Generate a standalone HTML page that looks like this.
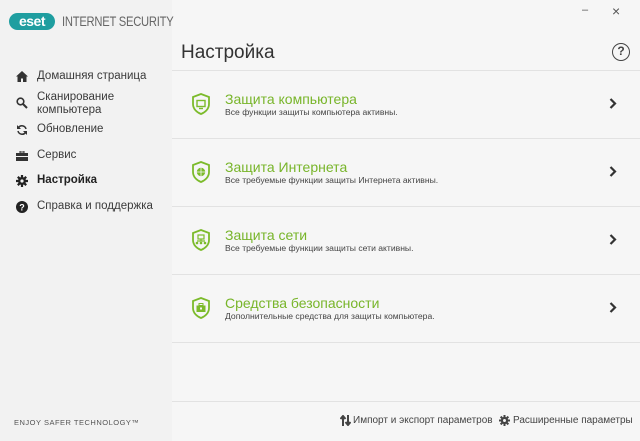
<!DOCTYPE html>
<html><head><meta charset="utf-8"><style>
*{margin:0;padding:0;box-sizing:border-box}
body{width:640px;height:441px;overflow:hidden;background:#f6f6f6;font-family:"Liberation Sans","DejaVu Sans",sans-serif;position:relative;color:#333}
.side{position:absolute;left:0;top:0;width:172px;height:441px;background:#f2f2f2}
.abs{position:absolute}
.nav{position:absolute;left:37px;font-size:11.5px;color:#3a3a3a;line-height:13px}
.ic{position:absolute;left:16px}
.line{position:absolute;left:172px;width:468px;height:1px;background:#e2e2e2}
.t{position:absolute;left:225px;font-size:14px;color:#78b52a}
.d{position:absolute;left:225px;font-size:8.6px;color:#444}
.chev{position:absolute;left:609px}
.sh{position:absolute;left:191px}
</style></head><body>
<div class="side"></div>
<div class="abs" style="left:9px;top:13px;width:46px;height:17px;border-radius:9px;background:#1f9ea0;color:#fff;font-weight:bold;font-size:14px;line-height:17px;text-align:center;letter-spacing:-0.5px">eset</div>
<div class="abs" style="left:62px;top:13px;font-size:14px;color:#666;letter-spacing:-0.3px;transform:scaleX(0.8);transform-origin:0 0;white-space:nowrap">INTERNET SECURITY</div>
<div class="abs" style="left:582px;top:4px;font-size:11px;color:#555">–</div>
<div class="abs" style="left:612px;top:3px;font-size:14px;color:#555">×</div>
<div class="abs" style="left:181px;top:42px;font-size:19px;color:#333">Настройка</div>
<div class="abs" style="left:612px;top:43px;width:18px;height:18px;border:1.6px solid #444;border-radius:50%;font-size:12px;font-weight:bold;text-align:center;line-height:15px;color:#444">?</div>
<svg class="ic" style="top:71px" width="12" height="11" viewBox="0 0 12 11"><path d="M6 0L0 5.5h1.5V11h3.5V7.5h2V11h3.5V5.5H12z" fill="#333"/></svg>
<div class="nav" style="top:70px">Домашняя страница</div>
<svg class="ic" style="top:97px" width="12" height="12" viewBox="0 0 12 12"><circle cx="4.5" cy="4.5" r="3.3" stroke="#333" stroke-width="1.6" fill="none"/><path d="M7 7l4 4" stroke="#333" stroke-width="2"/></svg>
<div class="nav" style="top:91px">Сканирование<br>компьютера</div>
<svg class="ic" style="top:124px" width="12" height="12" viewBox="0 0 12 12"><path d="M10 5A4.2 4.2 0 0 0 2.5 3.5M2 7a4.2 4.2 0 0 0 7.5 1.5" stroke="#333" stroke-width="1.5" fill="none"/><path d="M1 1v4h4z M11 11V7H7z" fill="#333"/></svg>
<div class="nav" style="top:123px">Обновление</div>
<svg class="ic" style="top:151px" width="12" height="10" viewBox="0 0 12 10"><path d="M4 0h4v2H4z" fill="none" stroke="#333"/><rect x="0" y="2" width="12" height="8" fill="#333"/><rect x="0" y="5" width="12" height="1" fill="#f2f2f2"/></svg>
<div class="nav" style="top:149px">Сервис</div>
<svg class="ic" style="top:175px" width="12" height="12" viewBox="0 0 12 12"><circle cx="6" cy="6" r="4" fill="#222"/><path d="M6 0v12M0 6h12M1.8 1.8l8.4 8.4M10.2 1.8l-8.4 8.4" stroke="#222" stroke-width="2.2"/><circle cx="6" cy="6" r="1.6" fill="#f2f2f2"/></svg>
<div class="nav" style="top:174px;font-weight:bold;color:#222">Настройка</div>
<svg class="ic" style="top:201px" width="12" height="12" viewBox="0 0 12 12"><circle cx="6" cy="6" r="6" fill="#222"/><text x="6" y="9.5" font-size="9" font-weight="bold" fill="#fff" text-anchor="middle" font-family="Liberation Sans">?</text></svg>
<div class="nav" style="top:200px">Справка и поддержка</div>
<div class="abs" style="left:14px;top:418px;font-size:7.5px;letter-spacing:0.5px;color:#555">ENJOY SAFER TECHNOLOGY™</div>
<div class="line" style="top:70px"></div>
<div class="line" style="top:138px"></div>
<div class="line" style="top:206px"></div>
<div class="line" style="top:274px"></div>
<div class="line" style="top:342px"></div>
<div class="line" style="top:401px"></div>
<svg class="sh" style="top:93px" width="20" height="22" viewBox="0 0 20 22"><path d="M10 1L2 4v7c0 5 4 8.5 8 10 4-1.5 8-5 8-10V4z" fill="none" stroke="#7cbb2b" stroke-width="1.8"/><rect x="6" y="7.5" width="8" height="6" fill="none" stroke="#7cbb2b" stroke-width="1.4"/><path d="M8 15.5h4" stroke="#7cbb2b" stroke-width="1.4"/></svg>
<div class="t" style="top:91px">Защита компьютера</div>
<div class="d" style="top:107px">Все функции защиты компьютера активны.</div>
<svg class="sh" style="top:161px" width="20" height="22" viewBox="0 0 20 22"><path d="M10 1L2 4v7c0 5 4 8.5 8 10 4-1.5 8-5 8-10V4z" fill="none" stroke="#7cbb2b" stroke-width="1.8"/><circle cx="10" cy="11" r="4.2" fill="#7cbb2b"/><path d="M5.8 11h8.4M10 6.8v8.4" stroke="#f6f6f6" stroke-width="0.8"/></svg>
<div class="t" style="top:159px">Защита Интернета</div>
<div class="d" style="top:175px">Все требуемые функции защиты Интернета активны.</div>
<svg class="sh" style="top:229px" width="20" height="22" viewBox="0 0 20 22"><path d="M10 1L2 4v7c0 5 4 8.5 8 10 4-1.5 8-5 8-10V4z" fill="none" stroke="#7cbb2b" stroke-width="1.8"/><rect x="7" y="6" width="6" height="4" fill="none" stroke="#7cbb2b" stroke-width="1.2"/><path d="M10 10v2M6 12h8" stroke="#7cbb2b" stroke-width="1.2"/><circle cx="6" cy="14" r="1.3" fill="#7cbb2b"/><circle cx="10" cy="14" r="1.3" fill="#7cbb2b"/><circle cx="14" cy="14" r="1.3" fill="#7cbb2b"/></svg>
<div class="t" style="top:227px">Защита сети</div>
<div class="d" style="top:243px">Все требуемые функции защиты сети активны.</div>
<svg class="sh" style="top:297px" width="20" height="22" viewBox="0 0 20 22"><path d="M10 1L2 4v7c0 5 4 8.5 8 10 4-1.5 8-5 8-10V4z" fill="none" stroke="#7cbb2b" stroke-width="1.8"/><rect x="8" y="6.5" width="4" height="2" fill="none" stroke="#7cbb2b"/><rect x="5.5" y="8.5" width="9" height="6.5" fill="#7cbb2b"/><rect x="9" y="10.5" width="2" height="2" fill="#f6f6f6"/></svg>
<div class="t" style="top:295px">Средства безопасности</div>
<div class="d" style="top:311px">Дополнительные средства для защиты компьютера.</div>
<svg class="chev" style="top:98px" width="8" height="11" viewBox="0 0 8 11"><path d="M1.5 1l4.5 4.5L1.5 10" stroke="#333" stroke-width="2.2" fill="none"/></svg>
<svg class="chev" style="top:166px" width="8" height="11" viewBox="0 0 8 11"><path d="M1.5 1l4.5 4.5L1.5 10" stroke="#333" stroke-width="2.2" fill="none"/></svg>
<svg class="chev" style="top:234px" width="8" height="11" viewBox="0 0 8 11"><path d="M1.5 1l4.5 4.5L1.5 10" stroke="#333" stroke-width="2.2" fill="none"/></svg>
<svg class="chev" style="top:302px" width="8" height="11" viewBox="0 0 8 11"><path d="M1.5 1l4.5 4.5L1.5 10" stroke="#333" stroke-width="2.2" fill="none"/></svg>
<svg class="abs" style="left:340px;top:415px" width="11" height="11" viewBox="0 0 11 11"><path d="M3 11V2M0.5 4L3 1l2.5 3M8 0v9M5.5 7L8 10l2.5-3" stroke="#444" stroke-width="2" fill="none"/></svg>
<div class="abs" style="left:353px;top:415px;font-size:10px;color:#444">Импорт и экспорт параметров</div>
<svg class="abs" style="left:499px;top:415px" width="11" height="11" viewBox="0 0 12 12"><circle cx="6" cy="6" r="4" fill="#444"/><path d="M6 0v12M0 6h12M1.8 1.8l8.4 8.4M10.2 1.8l-8.4 8.4" stroke="#444" stroke-width="2.2"/><circle cx="6" cy="6" r="1.6" fill="#f6f6f6"/></svg>
<div class="abs" style="left:513px;top:415px;font-size:10px;color:#444">Расширенные параметры</div>
</body></html>
